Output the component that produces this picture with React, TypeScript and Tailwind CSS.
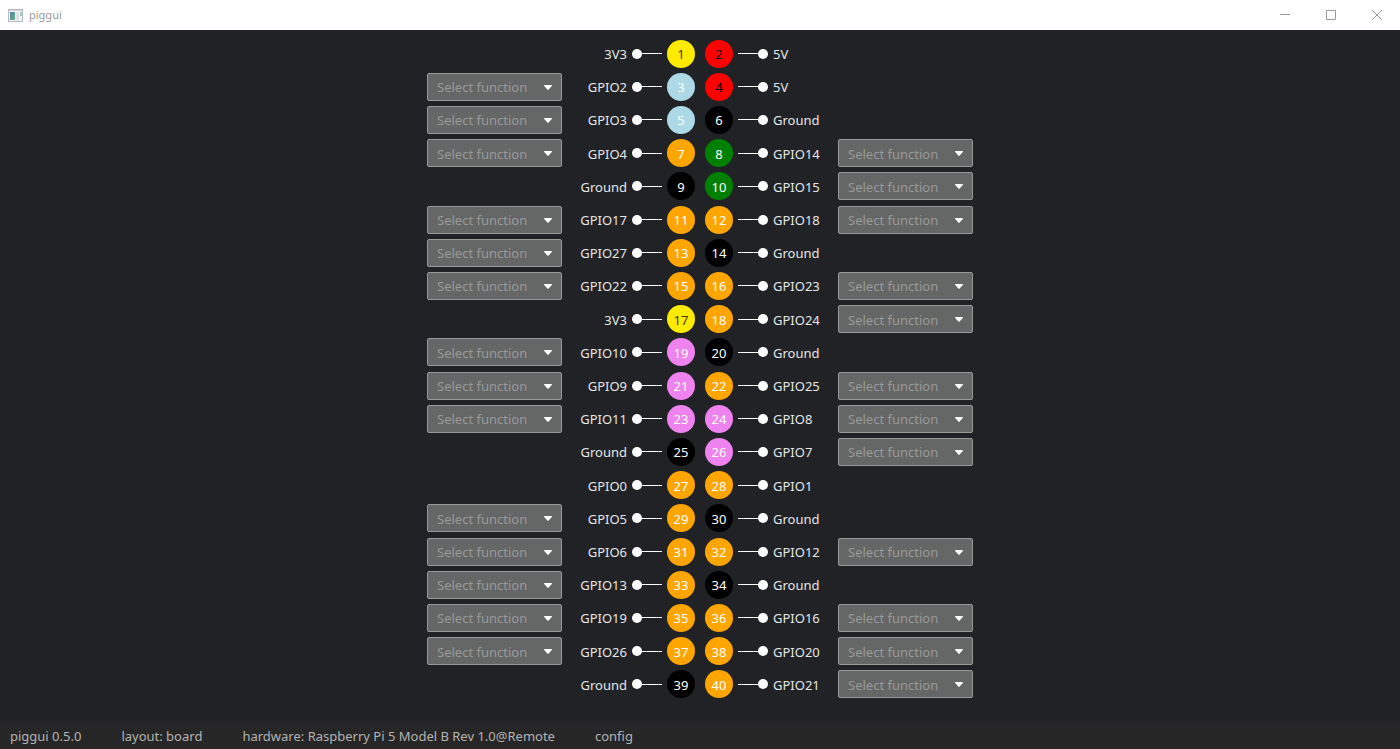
import React from "react";

type Tone = "yellow" | "red" | "blue" | "orange" | "green" | "black" | "violet";
type Pin = { name: string; tone: Tone; selectable?: boolean };

const tones: Record<Tone, string> = {
  yellow: "bg-[#ffeb00] text-[#3d3800]",
  red: "bg-[#ff0000] text-black",
  blue: "bg-[#add8e6] text-white",
  orange: "bg-[#ffa500] text-white",
  green: "bg-[#008000] text-white",
  black: "bg-black text-white",
  violet: "bg-[#ee82ee] text-white",
};

const fn = (name: string, tone: Tone = "orange"): Pin => ({ name, tone, selectable: true });
const fixed = (name: string, tone: Tone): Pin => ({ name, tone });

const rows: [Pin, Pin][] = [
  [fixed("3V3", "yellow"), fixed("5V", "red")],
  [fn("GPIO2", "blue"), fixed("5V", "red")],
  [fn("GPIO3", "blue"), fixed("Ground", "black")],
  [fn("GPIO4"), fn("GPIO14", "green")],
  [fixed("Ground", "black"), fn("GPIO15", "green")],
  [fn("GPIO17"), fn("GPIO18")],
  [fn("GPIO27"), fixed("Ground", "black")],
  [fn("GPIO22"), fn("GPIO23")],
  [fixed("3V3", "yellow"), fn("GPIO24")],
  [fn("GPIO10", "violet"), fixed("Ground", "black")],
  [fn("GPIO9", "violet"), fn("GPIO25")],
  [fn("GPIO11", "violet"), fn("GPIO8", "violet")],
  [fixed("Ground", "black"), fn("GPIO7", "violet")],
  [fixed("GPIO0", "orange"), fixed("GPIO1", "orange")],
  [fn("GPIO5"), fixed("Ground", "black")],
  [fn("GPIO6"), fn("GPIO12")],
  [fn("GPIO13"), fixed("Ground", "black")],
  [fn("GPIO19"), fn("GPIO16")],
  [fn("GPIO26"), fn("GPIO20")],
  [fixed("Ground", "black"), fn("GPIO21")],
];

function FunctionSelect({ id }: { id: string }) {
  return (
    <div className="relative h-7 w-[135px]">
      <select
        id={id}
        defaultValue=""
        className="h-full w-full appearance-none rounded-xs border border-[#999999] bg-[#656766] pt-px pr-6 pl-[9px] text-[#999999]"
      >
        <option value="">Select function</option>
        <option value="input">Input</option>
        <option value="output">Output</option>
      </select>
      <svg
        className="pointer-events-none absolute top-3 right-[10px] h-[5px] w-[8px] fill-white"
        viewBox="0 0 8 5"
      >
        <path d="M.5 0h7q.8.1.3.9L4.6 4.6q-.6.6-1.2 0L.2.9Q-.3.1.5 0Z" />
      </svg>
    </div>
  );
}

function PinSide({ pin, number, left }: { pin: Pin; number: number; left?: boolean }) {
  const id = `pin-${number}`;
  const label = "w-[55px] pt-px whitespace-nowrap";
  return (
    <div className={left ? "flex flex-row-reverse items-center" : "flex items-center"}>
      <span
        className={`flex size-7 shrink-0 items-center justify-center rounded-full pt-px ${tones[pin.tone]}`}
      >
        {number}
      </span>
      <span className={left ? "mx-[5px] flex flex-row-reverse items-center" : "mx-[5px] flex items-center"}>
        <span className="h-px w-5 bg-white" />
        <span className="size-[10px] rounded-full bg-white" />
      </span>
      {pin.selectable ? (
        <label htmlFor={id} className={left ? `${label} text-right` : label}>
          {pin.name}
        </label>
      ) : (
        <span className={left ? `${label} text-right` : label}>{pin.name}</span>
      )}
      <div className={left ? "mr-[10px] w-[135px]" : "ml-[10px] w-[135px]"}>
        {pin.selectable && <FunctionSelect id={id} />}
      </div>
    </div>
  );
}

function TitleBar() {
  const control = "flex h-full w-[46px] items-center justify-center";
  return (
    <header className="flex h-[30px] items-center bg-white pl-2 text-[11px] text-[#999999]">
      <svg className="h-[13px] w-[15px]" viewBox="0 0 15 13">
        <defs>
          <linearGradient id="pane" x1="0" y1="0" x2="1" y2="1">
            <stop offset="0" stopColor="#5385a8" />
            <stop offset="1" stopColor="#62b184" />
          </linearGradient>
        </defs>
        <path d="M0 0h15v13H0Z" fill="#b4b9c1" />
        <path d="M1 2h13v10H1Z" fill="#f3f4f6" />
        <path d="M1 1h13v1H1Z" fill="#d2d5da" />
        <path d="M2 3h5v8H2Z" fill="url(#pane)" />
        <path d="M8 3h3v8H8Z" fill="#dfe1e4" />
        <path d="M12 3h2v4h-2Z" fill="#9fcabf" />
      </svg>
      <h1 className="ml-[6px] flex-1">piggui</h1>
      <button type="button" aria-label="Minimize" className={control}>
        <svg className="size-[10px]" viewBox="0 0 10 10" stroke="#999999">
          <path d="M0 4.5h10" />
        </svg>
      </button>
      <button type="button" aria-label="Maximize" className={control}>
        <svg className="size-[10px]" viewBox="0 0 10 10" fill="none" stroke="#999999">
          <path d="M.5.5h9v9h-9Z" />
        </svg>
      </button>
      <button type="button" aria-label="Close" className={control}>
        <svg className="size-[10px]" viewBox="0 0 10 10" stroke="#999999">
          <path d="m0 0 10 10M10 0 0 10" />
        </svg>
      </button>
    </header>
  );
}

export default function App() {
  return (
    <div className="flex min-h-screen flex-col bg-[#202225] font-['Noto_Sans','Open_Sans',sans-serif] text-[13px] leading-5 text-[#e6e6e6]">
      <TitleBar />
      <main className="flex flex-1 flex-col pt-[7px] pb-[21px]">
        <ol className="grid flex-1 auto-rows-fr">
          {rows.map(([a, b], i) => (
            <li key={i} className="flex items-center justify-center gap-[10px]">
              <PinSide pin={a} number={2 * i + 1} left />
              <PinSide pin={b} number={2 * i + 2} />
            </li>
          ))}
        </ol>
      </main>
      <footer className="flex h-[27px] items-center gap-10 bg-[#262626] px-[10px] pt-px text-[#b3b3b3]">
        <button type="button">piggui 0.5.0</button>
        <button type="button">layout: board</button>
        <button type="button">hardware: Raspberry Pi 5 Model B Rev 1.0@Remote</button>
        <button type="button">config</button>
      </footer>
    </div>
  );
}
